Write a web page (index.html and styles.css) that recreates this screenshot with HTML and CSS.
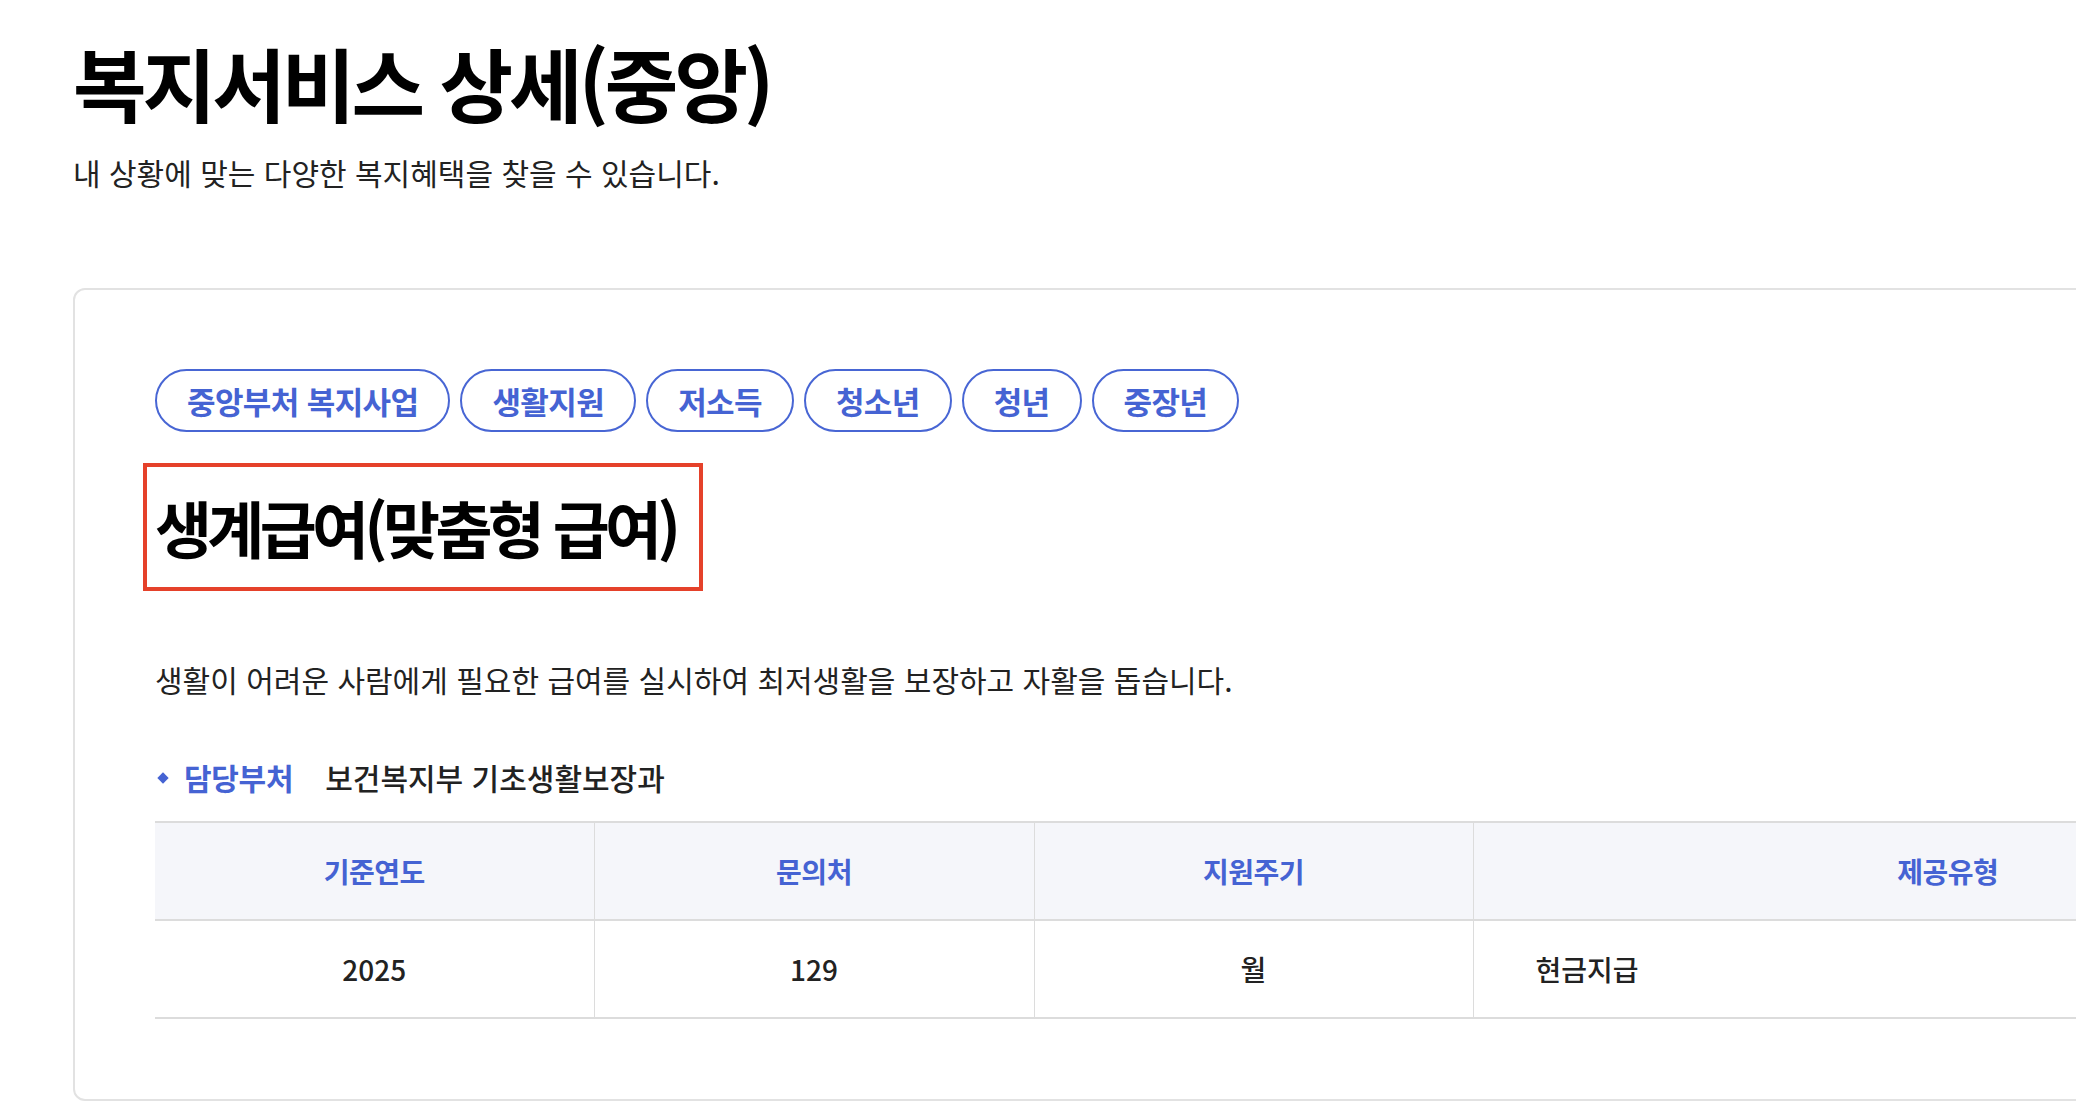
FILE: index.html
```html
<!DOCTYPE html>
<html lang="ko">
<head>
  <meta charset="UTF-8" />
  <meta name="viewport" content="width=device-width, initial-scale=1.0" />
  <title>복지서비스 상세(중앙)</title>
  <link rel="stylesheet" href="styles.css">
</head>
<body>
  <div class="page">
    <div class="page-head">
      <h1 class="page-title">복지서비스 상세(중앙)</h1>
      <p class="page-desc">내 상황에 맞는 다양한 복지혜택을 찾을 수 있습니다.</p>
    </div>

    <div class="service-card">
      <ul class="tag-list">
        <li class="tag">중앙부처 복지사업</li>
        <li class="tag">생활지원</li>
        <li class="tag">저소득</li>
        <li class="tag">청소년</li>
        <li class="tag">청년</li>
        <li class="tag">중장년</li>
      </ul>

      <h2 class="service-title">생계급여(맞춤형 급여)</h2>

      <p class="service-summary">생활이 어려운 사람에게 필요한 급여를 실시하여 최저생활을 보장하고 자활을 돕습니다.</p>

      <div class="dept-row">
        <span class="dept-label">담당부처</span>
        <span class="dept-value">보건복지부 기초생활보장과</span>
      </div>

      <table class="info-table">
        <colgroup>
          <col style="width: 439px">
          <col style="width: 440px">
          <col style="width: 439px">
          <col>
        </colgroup>
        <thead>
          <tr>
            <th>기준연도</th>
            <th>문의처</th>
            <th>지원주기</th>
            <th>제공유형</th>
          </tr>
        </thead>
        <tbody>
          <tr>
            <td>2025</td>
            <td>129</td>
            <td>월</td>
            <td class="left">현금지급</td>
          </tr>
        </tbody>
      </table>
    </div>
  </div>
</body>
</html>
```

FILE: styles.css
```css
html, body {
  overflow: hidden;
}
body {
  margin: 0;
  background: #fff;
  color: #222;
  font-family: "Noto Sans CJK KR", "Noto Sans", sans-serif;
}
.page {
  padding: 33px 0 0 73px;
}
.page-title {
  margin: 0;
  font-size: 80px;
  line-height: 96px;
  font-weight: 700;
  letter-spacing: -4px;
  color: #000;
}
.page-desc {
  margin: 22px 0 0 0;
  font-size: 30px;
  line-height: 42px;
  color: #222;
}
.service-card {
  width: 2431px;
  box-sizing: border-box;
  margin-top: 95px;
  padding: 79px 80px 80px 80px;
  border: 2px solid #e2e2e2;
  border-radius: 12px;
}
.tag-list {
  display: flex;
  gap: 10px;
  margin: 0;
  padding: 0;
  list-style: none;
}
.tag {
  padding: 12px 30px;
  border: 2px solid #4866d4;
  border-radius: 32px;
  color: #4563d3;
  font-size: 31px;
  line-height: 35px;
  font-weight: 700;
  letter-spacing: -0.6px;
}
.service-title {
  display: inline-block;
  margin: 31px 0 0 -12px;
  padding: 15px 23px 15px 8px;
  border: 4px solid #e5412a;
  font-size: 62px;
  line-height: 90px;
  font-weight: 700;
  letter-spacing: -4.7px;
  color: #000;
}
.service-summary {
  margin: 67px 0 0 0;
  font-size: 30px;
  line-height: 42px;
  color: #222;
}
.dept-row {
  display: flex;
  align-items: center;
  margin-top: 56px;
  font-size: 30px;
  line-height: 42px;
}
.dept-label {
  position: relative;
  padding-left: 29px;
  margin-right: 32px;
  color: #4563d3;
  font-weight: 700;
  letter-spacing: -0.3px;
}
.dept-label::before {
  content: "";
  position: absolute;
  left: 4px;
  top: 18px;
  width: 8px;
  height: 8px;
  background: #4563d3;
  transform: rotate(45deg);
}
.dept-value {
  font-weight: 500;
  color: #222;
}
.info-table {
  width: 100%;
  margin-top: 23px;
  border-collapse: collapse;
  border-top: 2px solid #dcdcdc;
  table-layout: fixed;
  font-size: 28px;
}
.info-table th,
.info-table td {
  height: 96px;
  padding: 0;
  text-align: center;
  border-bottom: 2px solid #dcdcdc;
  border-right: 1px solid #dcdcdc;
}
.info-table th:last-child,
.info-table td:last-child {
  border-right: none;
}
.info-table th {
  background: #f5f6fa;
  color: #4563d3;
  font-weight: 700;
  letter-spacing: -0.5px;
}
.info-table td {
  color: #222;
  font-weight: 500;
}
.info-table td.left {
  text-align: left;
  padding-left: 62px;
}
```
